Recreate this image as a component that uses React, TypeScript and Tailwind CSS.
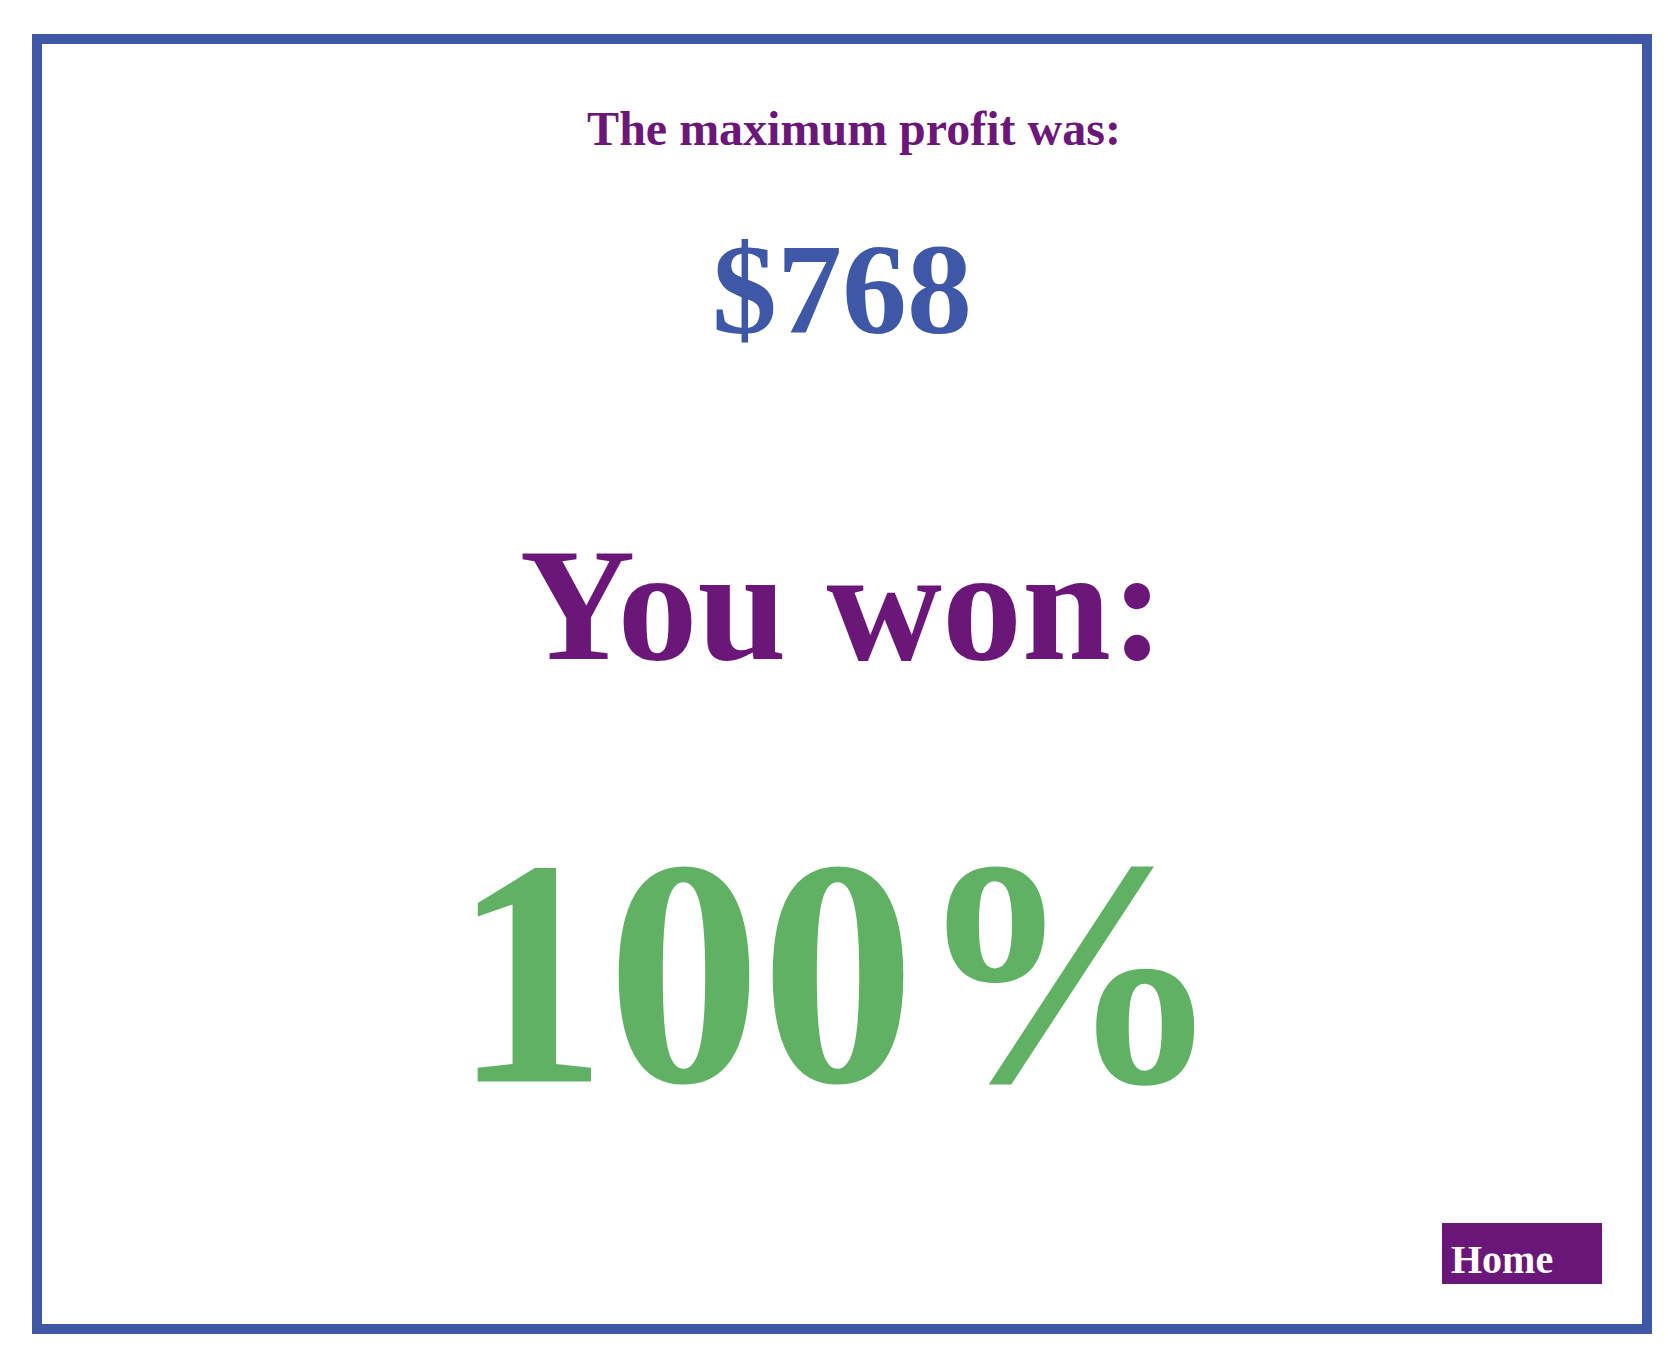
export default function App() {
  return (
    <div className="min-h-screen bg-white pl-[32px] pt-[34px] font-['Liberation_Serif','Times_New_Roman',serif]">
      {/* Result card */}
      <div className="flex h-[1300px] w-[1620px] flex-col items-center border-[10px] border-[#3f57a7] bg-white">
        <h2 className="mt-[61px] ml-[24px] text-[48px] font-bold leading-none text-[#6b1779]">
          The maximum profit was:
        </h2>

        <div className="mt-[71px] text-[130px] font-bold leading-none text-[#3f57a7]">
          $768
        </div>

        <h1 className="mt-[171px] text-[160px] font-bold leading-none text-[#6b1779]">
          You won:
        </h1>

        <div className="mt-[142px] mr-[8px] origin-bottom scale-y-105 text-[308px] font-bold leading-none text-[#60b163]">
          100%
        </div>

        {/* Footer action */}
        <button className="mt-auto mb-[40px] mr-[40px] h-[61px] w-[160px] self-end bg-[#6b1779] pl-[9px] pt-[12px] text-left text-[40px] font-bold leading-none text-white">
          Home
        </button>
      </div>
    </div>
  );
}
